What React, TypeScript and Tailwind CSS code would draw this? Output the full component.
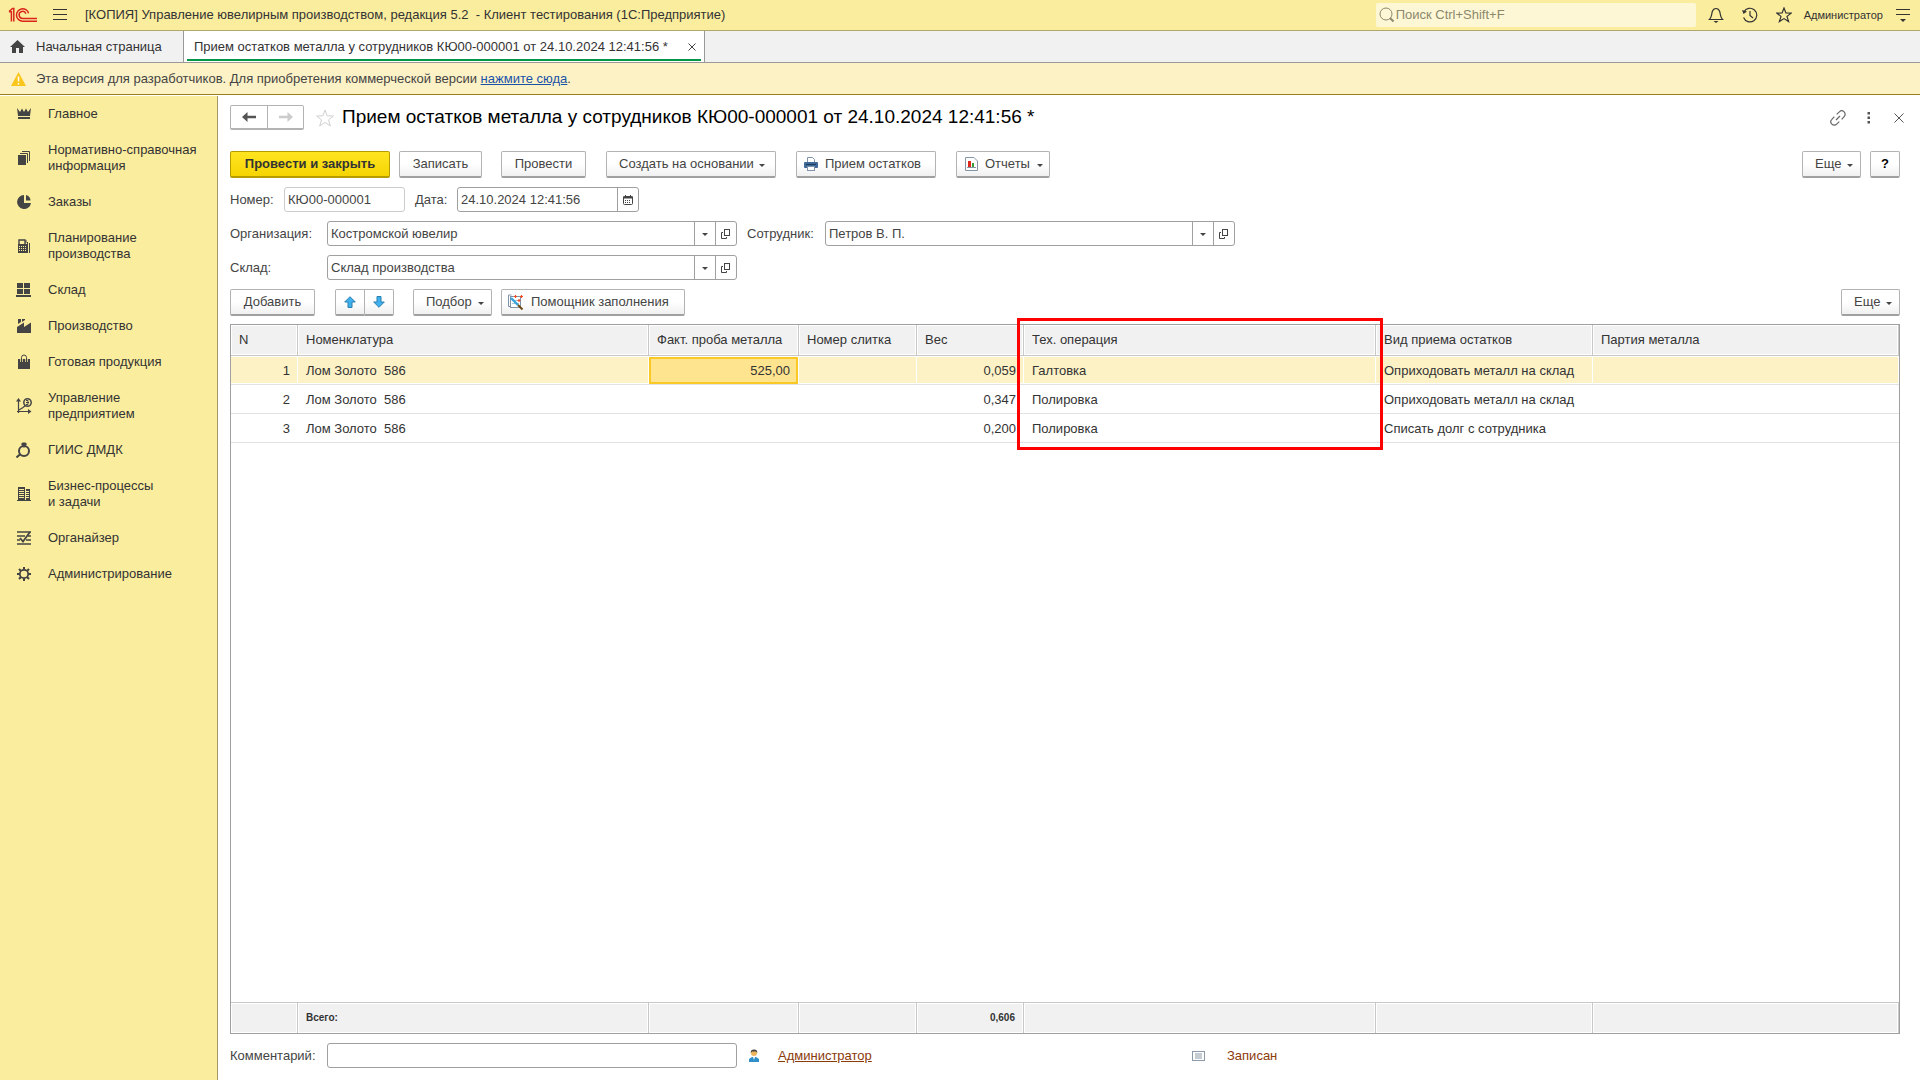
import type { ReactNode } from "react";

const ink = "#444444";

function OneCLogo() {
  return (
    <svg width="30" height="16" viewBox="0 0 30 16" fill="none" stroke="#d9251c" strokeWidth="1.5">
      <path d="M1 4.5 L4.5 1.5 H5.8 V14.5 M1 4.8 H3.4 V14.5" />
      <path d="M20.6 6.2 A6.2 6.2 0 1 0 14.8 14.2 H29" />
      <path d="M17.9 6.7 A3.5 3.5 0 1 0 14.8 11.4 H29" />
    </svg>
  );
}

const sideIcons: Record<string, ReactNode> = {
  crown: (
    <>
      <path d="M1 2 L4 6 L6 2.5 L8 6 L10 2.5 L12 6 L15 2 L14 10 H2 Z" />
      <rect x="2" y="11" width="12" height="2" />
    </>
  ),
  files: (
    <>
      <rect x="2" y="5" width="8" height="10" />
      <path d="M4 3.5 H11.5 V13 M6 1.5 H13.5 V11" fill="none" stroke={ink} />
    </>
  ),
  pie: (
    <>
      <path d="M8 1 A7 7 0 1 0 15 9 H8 Z" />
      <path d="M10 1 A6 6 0 0 1 14.5 6.5 H10 Z" />
    </>
  ),
  planner: (
    <>
      <path d="M3 6 V2 H9 V6" fill="none" stroke={ink} strokeWidth="1.4" />
      <path fillRule="evenodd" d="M2 6 H11 V15 H2 Z M3 8 H4 V9 H3 Z M5 8 H6 V9 H5 Z M7 8 H8 V9 H7 Z M9 8 H10 V9 H9 Z M3 10 H4 V11 H3 Z M5 10 H6 V11 H5 Z M7 10 H8 V11 H7 Z M9 10 H10 V11 H9 Z M3 12 H4 V13 H3 Z M5 12 H6 V13 H5 Z M7 12 H8 V13 H7 Z M9 12 H10 V13 H9 Z" />
      <path d="M10 2 V5 M13.5 5 V15" fill="none" stroke={ink} />
      <rect x="11" y="4" width="1" height="11" />
    </>
  ),
  store: (
    <>
      <rect x="1" y="1" width="6" height="5" />
      <rect x="8" y="1" width="6" height="5" />
      <rect x="1" y="7" width="6" height="5" />
      <rect x="8" y="7" width="6" height="5" />
      <rect x="0" y="13" width="15" height="2" />
    </>
  ),
  factory: (
    <>
      <path d="M2 1 H5 V4 L2 6 Z M6 1 H9 V2 L6 4 Z" />
      <path d="M1 9 L8 4.5 V9 L15 4.5 V15 H1 Z" />
    </>
  ),
  bag: (
    <>
      <rect x="2" y="5" width="12" height="10" />
      <path d="M5.5 8 V5 M10.5 8 V5" stroke="#fbed9e" strokeWidth="2.4" />
      <path d="M5.5 8 V3.5 A2.5 2.5 0 0 1 10.5 3.5 V8" fill="none" stroke={ink} strokeWidth="1" />
    </>
  ),
  chart: (
    <>
      <path d="M2.5 1.5 V15 M1 13.5 H14 M3 12 L7 9.5 L10 7" fill="none" stroke={ink} strokeWidth="1.2" />
      <path d="M2.5 0 L5 3.5 H0 Z M15.5 13.5 L12 11 V16 Z" />
      <circle cx="11.5" cy="4.5" r="3.7" fill="none" stroke={ink} strokeWidth="1.5" />
      <path d="M10 2.5 H12 V6.5 H10 M10 4.5 H13" fill="none" stroke={ink} />
    </>
  ),
  ring: (
    <>
      <circle cx="8" cy="9" r="5" fill="none" stroke={ink} strokeWidth="2" />
      <path d="M5 2 L6.5 0.5 H9.5 L11 2 L8 6 Z" />
      <path d="M4.5 12 L0.5 15.5" stroke={ink} strokeWidth="2" />
    </>
  ),
  buildings: (
    <>
      <path fillRule="evenodd" d="M2 1 H9 V15 H2 Z M3 3 H8 V4 H3 Z M3 5 H8 V6 H3 Z M3 7 H8 V8 H3 Z M3 9 H8 V10 H3 Z M3 11 H8 V12 H3 Z" />
      <path fillRule="evenodd" d="M10 3 H14 V15 H10 Z M10 5 H13 V6 H10 Z M10 7 H13 V8 H10 Z M10 9 H13 V10 H10 Z M10 11 H13 V12 H10 Z" />
      <rect x="1" y="14" width="14" height="1" />
    </>
  ),
  organizer: (
    <>
      <path d="M1 2 H15 M1 6 H9 M12 6 H15 M1 10 H4 M10 10 H15 M1 14 H15" stroke={ink} strokeWidth="1.6" />
      <path d="M4 8 L7 11.5 L14 2" fill="none" stroke={ink} strokeWidth="1.8" />
    </>
  ),
  gear: (
    <>
      <circle cx="8" cy="8" r="4.2" fill="none" stroke={ink} strokeWidth="1.8" />
      <path d="M8 1 V4 M8 12 V15 M1 8 H4 M12 8 H15 M3 3 L5 5 M11 11 L13 13 M13 3 L11 5 M5 11 L3 13" stroke={ink} strokeWidth="2" />
    </>
  ),
};

const menu = [
  { icon: "crown", label: "Главное" },
  { icon: "files", label: "Нормативно-справочная информация" },
  { icon: "pie", label: "Заказы" },
  { icon: "planner", label: "Планирование производства" },
  { icon: "store", label: "Склад" },
  { icon: "factory", label: "Производство" },
  { icon: "bag", label: "Готовая продукция" },
  { icon: "chart", label: "Управление предприятием" },
  { icon: "ring", label: "ГИИС ДМДК" },
  { icon: "buildings", label: "Бизнес-процессы и\u00a0задачи" },
  { icon: "organizer", label: "Органайзер" },
  { icon: "gear", label: "Администрирование" },
];

const rows = [
  { n: 1, item: "Лом Золото  586", probe: "525,00", weight: "0,059", operation: "Галтовка", kind: "Оприходовать металл на склад" },
  { n: 2, item: "Лом Золото  586", probe: "", weight: "0,347", operation: "Полировка", kind: "Оприходовать металл на склад" },
  { n: 3, item: "Лом Золото  586", probe: "", weight: "0,200", operation: "Полировка", kind: "Списать долг с сотрудника" },
];

const btn =
  "flex h-[27px] shrink-0 items-center whitespace-nowrap rounded-[2px] border border-[#b3b3b3] border-b-2 border-b-[#a0a0a0] bg-linear-to-b from-white from-50% to-[#f0f0f0] text-[#444]";
const th = "relative border-r border-b border-[#c8c8c8] bg-[#f1f1f1] px-2 text-left font-normal shadow-[inset_0_0_0_1px_#fff]";
const tf = "border-r border-t border-[#c8c8c8] bg-[#f1f1f1] px-2 text-[10px] font-bold shadow-[inset_0_0_0_1px_#fff]";

function Caret() {
  return (
    <svg width="6" height="3" viewBox="0 0 6 3" fill="#444" className="mt-0.5">
      <path d="M0 0 H6 L3 3 Z" />
    </svg>
  );
}

function OpenIcon() {
  return (
    <svg width="10" height="10" viewBox="0 0 10 10" fill="none" stroke="#444">
      <rect x="3.5" y="0.5" width="5" height="6" />
      <path d="M2 3.5 H0.5 V9.5 H5.5 V8" />
    </svg>
  );
}

function PickField({ id, value }: { id: string; value: string }) {
  return (
    <div className="flex h-[25px] w-[410px] rounded-[3px] border border-[#a0a0a0]">
      <input id={id} defaultValue={value} className="min-w-0 grow px-[3px] outline-none" />
      <button type="button" aria-label="Выбрать" className="flex w-[21px] shrink-0 items-center justify-center border-l border-[#a0a0a0]">
        <Caret />
      </button>
      <button type="button" aria-label="Открыть" className="flex w-[21px] shrink-0 items-center justify-center border-l border-[#a0a0a0]">
        <OpenIcon />
      </button>
    </div>
  );
}

function TitleBar() {
  return (
    <header className="flex h-[31px] shrink-0 items-center border-b border-[#b0a76c] bg-[#fbed9e] pl-2 text-[#333]">
      <OneCLogo />
      <button type="button" aria-label="Меню" className="ml-[15px]">
        <svg width="14" height="12" viewBox="0 0 14 12" stroke="#333">
          <path d="M0 0.5 H14 M0 5.5 H14 M0 10.5 H14" />
        </svg>
      </button>
      <span className="ml-[18px] whitespace-pre">[КОПИЯ] Управление ювелирным производством, редакция 5.2  - Клиент тестирования (1С:Предприятие)</span>
      <div className="ml-auto flex h-6 w-[320px] items-center rounded-[2px] bg-[#fdf7d6] pl-[3px]">
        <svg width="16" height="16" viewBox="0 0 16 16" fill="none" stroke="#8c886c">
          <circle cx="7" cy="7" r="6" />
          <path d="M11 11 L14.5 14.5" strokeWidth="2" />
        </svg>
        <input aria-label="Поиск" placeholder="Поиск Ctrl+Shift+F" className="ml-px grow outline-none placeholder:text-[#8c886c]" />
      </div>
      <button type="button" aria-label="Уведомления" className="ml-3">
        <svg width="16" height="16" viewBox="0 0 16 16" fill="none" stroke="#333" strokeWidth="1.2">
          <path d="M1.5 12.5 C4 10 3.5 7 4.3 4.5 C5 2.5 6.3 1.5 8 1.5 C9.7 1.5 11 2.5 11.7 4.5 C12.5 7 12 10 14.5 12.5 Z" />
          <path d="M5.5 14 H10.5 L8 16 Z" fill="#333" stroke="none" />
        </svg>
      </button>
      <button type="button" aria-label="История" className="ml-[18px]">
        <svg width="16" height="16" viewBox="0 0 16 16" fill="none" stroke="#333" strokeWidth="1.2">
          <path d="M1.9 5 A6.8 6.8 0 1 1 1.6 10.5 M8 4 V8.5 L11 11" />
          <path d="M0 3 L1.5 7 L5 4.5 Z" fill="#333" stroke="none" />
        </svg>
      </button>
      <button type="button" aria-label="Избранное" className="ml-[18px]">
        <svg width="16" height="16" viewBox="0 0 16 16" fill="none" stroke="#333" strokeWidth="1.2">
          <path d="M8 1 L9.9 6 L15.2 6.1 L11 9.4 L12.6 14.6 L8 11.6 L3.4 14.6 L5 9.4 L0.8 6.1 L6.1 6 Z" />
        </svg>
      </button>
      <button type="button" className="ml-3 text-[11px]">Администратор</button>
      <button type="button" aria-label="Настройки" className="ml-[13px] mr-[10px]">
        <svg width="14" height="14" viewBox="0 0 14 14" stroke="#333">
          <path d="M0 1.5 H14 M0 6.5 H14" />
          <path d="M4 11 H10 L7 14 Z" fill="#333" stroke="none" />
        </svg>
      </button>
    </header>
  );
}

function TabBar() {
  return (
    <nav className="flex h-8 shrink-0 border-b border-[#999] bg-[#f1f1f1] text-[#333]">
      <a href="#home" className="flex w-[184px] items-center border-r border-[#999] pl-[10px]">
        <svg width="15" height="13" viewBox="0 0 15 13" fill={ink}>
          <path d="M7.5 0 L15 7 H13 V13 H9 V8 H6 V13 H2 V7 H0 Z" />
        </svg>
        <span className="ml-[11px]">Начальная страница</span>
      </a>
      <div className="flex border-r border-[#999] bg-white px-[3px]">
        <div className="mb-px flex items-center border-b-2 border-[#009646] pt-[3px] pl-[7px] pr-[5px]">
          <a href="#doc" className="w-[494px]">Прием остатков металла у сотрудников КЮ00-000001 от 24.10.2024 12:41:56 *</a>
          <button type="button" aria-label="Закрыть вкладку">
            <svg width="8" height="8" viewBox="0 0 8 8" stroke="#444">
              <path d="M0.5 0.5 L7.5 7.5 M7.5 0.5 L0.5 7.5" />
            </svg>
          </button>
        </div>
      </div>
    </nav>
  );
}

function Sidebar() {
  return (
    <aside className="w-[218px] shrink-0 border-r border-[#a39a66] bg-[#fbed9e] text-[#333]">
      {menu.map((m) => (
        <a key={m.icon} href={`#${m.icon}`} className="flex items-center py-[10px] pl-4 leading-4">
          <svg width="16" height="16" viewBox="0 0 16 16" fill={ink} className="shrink-0">
            {sideIcons[m.icon]}
          </svg>
          <span className="ml-4 w-[160px]">{m.label}</span>
        </a>
      ))}
    </aside>
  );
}

function DocHeader() {
  return (
    <div className="flex h-[25px] items-center">
      <div className="flex h-[25px] rounded-[2px] border border-[#b3b3b3] border-b-2">
        <button type="button" aria-label="Назад" className="flex w-[37px] items-center justify-center border-r border-[#b3b3b3]">
          <svg width="14" height="10" viewBox="0 0 14 10" fill="#555">
            <path d="M0 5 L5.5 0 V3.7 H14 V6.3 H5.5 V10 Z" />
          </svg>
        </button>
        <button type="button" aria-label="Вперед" className="flex w-[35px] items-center justify-center">
          <svg width="14" height="10" viewBox="0 0 14 10" fill="#ccc">
            <path d="M14 5 L8.5 0 V3.7 H0 V6.3 H8.5 V10 Z" />
          </svg>
        </button>
      </div>
      <button type="button" aria-label="В избранное" className="ml-3">
        <svg width="18" height="18" viewBox="0 0 18 18" fill="none" stroke="#d0d0d0">
          <path d="M9 1 L11.2 6.8 L17.4 7 L12.5 10.8 L14.3 17 L9 13.4 L3.7 17 L5.5 10.8 L0.6 7 L6.8 6.8 Z" />
        </svg>
      </button>
      <h1 className="ml-2 pb-0.5 text-[19px] leading-6 text-black">Прием остатков металла у сотрудников КЮ00-000001 от 24.10.2024 12:41:56 *</h1>
      <button type="button" aria-label="Ссылка" className="ml-auto">
        <svg width="16" height="16" viewBox="0 0 24 24" fill="none" stroke="#666" strokeWidth="1.8">
          <path d="M9 15 L15 9 M10 6.5 L14 2.8 A4.8 4.8 0 0 1 21.2 10 L17.5 14 M14 17.5 L10 21.2 A4.8 4.8 0 0 1 2.8 14 L6.5 10" />
        </svg>
      </button>
      <button type="button" aria-label="Дополнительно" className="ml-[21px]">
        <svg width="4" height="12" viewBox="0 0 4 12" fill="#555">
          <path d="M0.5 0 H3 V2.5 H0.5 Z M0.5 4.5 H3 V7 H0.5 Z M0.5 9 H3 V11.5 H0.5 Z" />
        </svg>
      </button>
      <button type="button" aria-label="Закрыть" className="ml-[23px] mr-[-4px]">
        <svg width="10" height="10" viewBox="0 0 10 10" stroke="#555">
          <path d="M0.5 0.5 L9.5 9.5 M9.5 0.5 L0.5 9.5" />
        </svg>
      </button>
    </div>
  );
}

function CommandBar() {
  return (
    <div className="mt-[21px] flex">
      <button type="button" className="flex h-[27px] w-[160px] items-center justify-center rounded-[2px] border border-b-2 border-[#b59c00] bg-linear-to-b from-[#ffe51f] to-[#f5d400] font-bold text-[#333]">
        Провести и закрыть
      </button>
      <button type="button" className={`${btn} ml-[9px] w-[83px] justify-center`}>Записать</button>
      <button type="button" className={`${btn} ml-[19px] w-[85px] justify-center`}>Провести</button>
      <button type="button" className={`${btn} ml-5 w-[170px] gap-[5px] pl-3`}>
        Создать на основании <Caret />
      </button>
      <button type="button" className={`${btn} ml-5 w-[140px] gap-[7px] pl-[7px]`}>
        <svg width="14" height="14" viewBox="0 0 14 14">
          <path d="M3.5 6 V0.5 H8.5 L10.5 2.5 V6" fill="#fff" stroke="#7e93a8" />
          <rect x="0" y="5" width="14" height="6" rx="1" fill="#3f6996" />
          <rect x="2" y="7" width="10" height="1" fill="#1d3c5f" />
          <rect x="3.5" y="9.5" width="7" height="4" fill="#fff" stroke="#7e93a8" />
        </svg>
        Прием остатков
      </button>
      <button type="button" className={`${btn} ml-5 w-[94px] gap-[7px] pl-2`}>
        <svg width="13" height="14" viewBox="0 0 13 14">
          <path d="M0.5 0.5 H9 L12.5 4 V13.5 H0.5 Z" fill="#fff" stroke="#8496a5" />
          <rect x="3" y="4" width="3" height="6" fill="#e0251b" />
          <rect x="7" y="6" width="2" height="4" fill="#3a9b35" />
          <path d="M2 10.5 H11" stroke="#8496a5" />
        </svg>
        Отчеты <Caret />
      </button>
      <button type="button" className={`${btn} ml-auto w-[59px] gap-[6px] pl-3`}>Еще <Caret /></button>
      <button type="button" aria-label="Справка" className={`${btn} ml-[9px] w-[30px] justify-center font-bold text-black`}>?</button>
    </div>
  );
}

function Fields() {
  return (
    <div className="mt-[9px] flex flex-col gap-[9px]">
      <div className="flex items-center">
        <label htmlFor="number" className="w-[54px]">Номер:</label>
        <input id="number" readOnly defaultValue="КЮ00-000001" className="h-[25px] w-[121px] rounded-[3px] border border-[#ccc] px-[3px] outline-none" />
        <label htmlFor="date" className="ml-[10px] w-[42px]">Дата:</label>
        <div className="flex h-[25px] w-[182px] rounded-[3px] border border-[#a0a0a0]">
          <input id="date" defaultValue="24.10.2024 12:41:56" className="min-w-0 grow px-[3px] outline-none" />
          <button type="button" aria-label="Календарь" className="flex w-[21px] shrink-0 items-center justify-center border-l border-[#a0a0a0]">
            <svg width="10" height="10" viewBox="0 0 10 10">
              <rect x="0.5" y="1.5" width="9" height="8" rx="1" fill="#fff" stroke="#444" />
              <path d="M0 2.5 H10" stroke="#444" strokeWidth="2" />
              <path d="M2.5 0 V2 M7.5 0 V2" stroke="#444" />
              <path d="M2 5.5 H8 M2 7.5 H8" stroke="#444" strokeDasharray="1 1" />
            </svg>
          </button>
        </div>
      </div>
      <div className="flex items-center">
        <label htmlFor="org" className="w-[97px]">Организация:</label>
        <PickField id="org" value="Костромской ювелир" />
        <label htmlFor="person" className="ml-[10px] w-[78px]">Сотрудник:</label>
        <PickField id="person" value="Петров В. П." />
      </div>
      <div className="flex items-center">
        <label htmlFor="store" className="w-[97px]">Склад:</label>
        <PickField id="store" value="Склад производства" />
      </div>
    </div>
  );
}

function TableBar() {
  return (
    <div className="mt-[9px] flex">
      <button type="button" className={`${btn} w-[85px] justify-center`}>Добавить</button>
      <div className="ml-5 flex">
        <button type="button" aria-label="Вверх" className={`${btn} w-[30px] justify-center rounded-r-none`}>
          <svg width="12" height="12" viewBox="0 0 12 12" fill="#3fb1ee" stroke="#2a7fae">
            <path d="M6 0.7 L11.3 6 H8 V11.5 H4 V6 H0.7 Z" />
          </svg>
        </button>
        <button type="button" aria-label="Вниз" className={`${btn} w-[29px] justify-center rounded-l-none border-l-0`}>
          <svg width="12" height="12" viewBox="0 0 12 12" fill="#3fb1ee" stroke="#2a7fae">
            <path d="M6 11.3 L0.7 6 H4 V0.5 H8 V6 H11.3 Z" />
          </svg>
        </button>
      </div>
      <button type="button" className={`${btn} ml-[19px] w-[79px] gap-[6px] pl-3`}>Подбор <Caret /></button>
      <button type="button" className={`${btn} ml-[9px] w-[184px] gap-[7px] pl-[6px]`}>
        <svg width="16" height="16" viewBox="0 0 16 16" fill="none">
          <path d="M3.5 1 H0.5 V12.5 H3" stroke="#7e93a8" />
          <rect x="2.5" y="2.5" width="10" height="11" fill="#fff" stroke="#7e93a8" />
          <path d="M4 6.5 H11 M4 9.5 H11" stroke="#a9c4d6" />
          <path d="M3 4 L10 11" stroke="#35a3dc" strokeWidth="2.4" />
          <path d="M10 11 L14.5 15.5" stroke="#6b4a14" strokeWidth="2" />
          <path d="M6 2.5 H9 M7.5 1 V4 M12 2.5 H15 M13.5 1 V4 M9.5 6.5 H12.5 M11 5 V8" stroke="#ee4a23" strokeWidth="1.2" />
        </svg>
        Помощник заполнения
      </button>
      <button type="button" className={`${btn} ml-auto w-[59px] gap-[6px] pl-3`}>Еще <Caret /></button>
    </div>
  );
}

function ItemsTable() {
  return (
    <div className="mt-2 grid grow border border-[#a0a0a0]">
      <table className="h-full w-full table-fixed border-separate border-spacing-0 text-[#333]">
        <colgroup>
          <col className="w-[67px]" />
          <col className="w-[351px]" />
          <col className="w-[150px]" />
          <col className="w-[118px]" />
          <col className="w-[107px]" />
          <col className="w-[352px]" />
          <col className="w-[217px]" />
          <col />
        </colgroup>
        <thead>
          <tr className="h-[31px]">
            <th className={th}>N</th>
            <th className={th}>Номенклатура</th>
            <th className={th}>Факт. проба металла</th>
            <th className={th}>Номер слитка</th>
            <th className={th}>Вес</th>
            <th className={th}>
              Тех. операция
              <span className="pointer-events-none absolute -top-[7px] -left-[7px] -right-2 z-10 h-[132px] border-3 border-[#ff0000]" />
            </th>
            <th className={th}>Вид приема остатков</th>
            <th className={th}>Партия металла</th>
          </tr>
        </thead>
        <tbody>
          {rows.map((r) => {
            const td =
              r.n === 1
                ? "border-b border-[#e2e2e2] bg-[#fdf2c6] px-2 pt-0.5 shadow-[inset_-1px_0_0_#fff,inset_0_1px_0_#fff,inset_0_-1px_0_#fff]"
                : "border-b border-[#e2e2e2] px-2 pt-0.5";
            return (
              <tr key={r.n} className="h-[29px]">
                <td className={`${td} text-right`}>{r.n}</td>
                <td className={`${td} whitespace-pre`}>{r.item}</td>
                {r.n === 1 ? (
                  <td className="border-b border-[#e2e2e2] pt-px pr-px">
                    <div className="flex h-[27px] items-center justify-end border-2 border-[#fbc926] bg-[#fee48f] pr-[6px]">{r.probe}</div>
                  </td>
                ) : (
                  <td className={`${td} text-right`}>{r.probe}</td>
                )}
                <td className={td} />
                <td className={`${td} text-right`}>{r.weight}</td>
                <td className={td}>{r.operation}</td>
                <td className={td}>{r.kind}</td>
                <td className={td} />
              </tr>
            );
          })}
          <tr>
            <td colSpan={8} />
          </tr>
        </tbody>
        <tfoot>
          <tr className="h-[31px]">
            <td className={tf} />
            <td className={tf}>Всего:</td>
            <td className={tf} />
            <td className={tf} />
            <td className={`${tf} text-right`}>0,606</td>
            <td className={tf} />
            <td className={tf} />
            <td className={tf} />
          </tr>
        </tfoot>
      </table>
    </div>
  );
}

function FooterBar() {
  return (
    <div className="mt-[9px] flex items-center">
      <label htmlFor="comment" className="w-[97px]">Комментарий:</label>
      <input id="comment" className="h-[25px] w-[410px] rounded-[3px] border border-[#a0a0a0] px-[3px] outline-none" />
      <svg width="10" height="13" viewBox="0 0 10 13" className="ml-3">
        <path d="M0 13 V10 L3 8 H7 L10 10 V13 Z" fill="#2f8fc9" />
        <circle cx="5" cy="4" r="3" fill="#f0b45c" />
        <path d="M1.6 4 A3.4 3.4 0 0 1 8.4 4 L7 2.6 H3 Z" fill="#444" />
        <path d="M4 8 L5 11 L6 8 Z" fill="#fff" />
      </svg>
      <a href="#user" className="ml-[19px] w-[414px] text-[#8b3a0a] underline">Администратор</a>
      <svg width="13" height="10" viewBox="0 0 13 10" fill="#fff" stroke="#8c9bab">
        <rect x="0.5" y="0.5" width="12" height="9" />
        <path d="M3 3 H10 M3 5 H10 M3 7 H10" />
      </svg>
      <span className="ml-[22px] text-[#8b3a0a]">Записан</span>
    </div>
  );
}

export default function App() {
  return (
    <div className="flex min-h-screen flex-col bg-white font-['Liberation_Sans',Arial,sans-serif] text-[13px] leading-4 text-[#444]">
      <TitleBar />
      <TabBar />
      <div className="flex h-8 shrink-0 items-center border-b border-[#96801c] bg-[#fdf2c6] pl-[11px]">
        <svg width="15" height="14" viewBox="0 0 15 14">
          <path d="M7.5 0 L15 14 H0 Z" fill="#fbc61c" />
          <path d="M7.5 4.5 V9.5 M7.5 11 V12.5" stroke="#fff" strokeWidth="1.5" />
        </svg>
        <p className="ml-[10px]">
          Эта версия для разработчиков. Для приобретения коммерческой версии{" "}
          <a href="#buy" className="text-[#1a52a8] underline">нажмите сюда</a>.
        </p>
      </div>
      <div className="mt-px flex grow">
        <Sidebar />
        <main className="flex min-w-0 grow flex-col pt-[9px] pr-5 pb-3 pl-3">
          <DocHeader />
          <CommandBar />
          <Fields />
          <TableBar />
          <ItemsTable />
          <FooterBar />
        </main>
      </div>
    </div>
  );
}
